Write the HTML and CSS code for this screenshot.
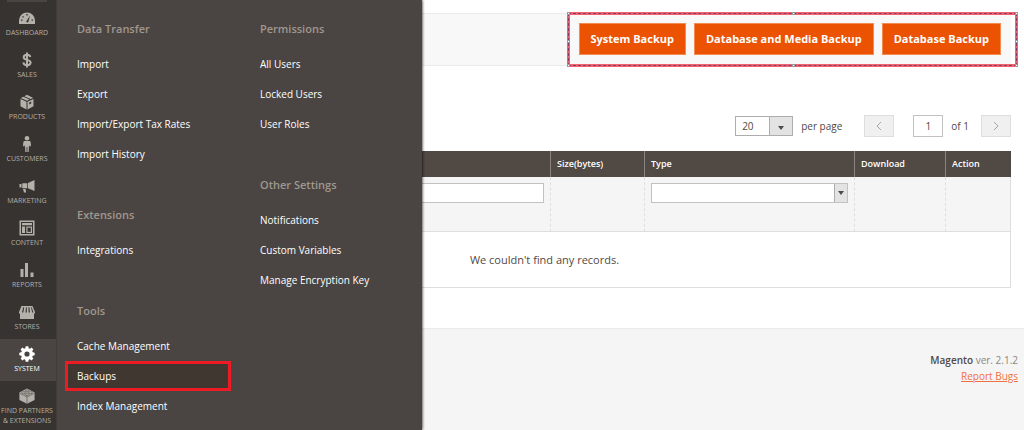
FILE: index.html
```html
<!DOCTYPE html>
<html lang="en">
<head>
<meta charset="utf-8">
<title>Backups</title>
<link rel="stylesheet" href="styles.css">
</head>
<body>
<div class="app">
  <nav class="sidebar" aria-label="Main">
    <ul class="nav-list">
      <li><a class="nav-item" href="#"><svg class="nav-icon" viewBox="0 0 16 16"><path d="M0 14V10.500a8 8 0 0 1 16 0V14z"/><path class="cut" d="M7 12l4-6.500L9.200 12.600zM2 9.500h1.500v1.300H2zM3.300 6.200h1.400v1.400H3.300zM7.300 4h1.400v1.400H7.300zM12.500 9.500H14v1.300h-1.500z"/></svg><span>Dashboard</span></a></li>
      <li><a class="nav-item" href="#"><svg class="nav-icon" viewBox="0 0 16 16"><path class="line" d="M11.300 5C11 3.300 9.700 2.700 8 2.700c-2 0-3.300.9-3.300 2.500 0 3.500 6.900 1.900 6.900 5.400 0 1.800-1.500 2.700-3.500 2.700s-3.500-.9-3.700-2.900M8 .5v15"/></svg><span>Sales</span></a></li>
      <li><a class="nav-item" href="#"><svg class="nav-icon" viewBox="0 0 16 16"><path d="M1.500 5l6 2.700V15.500l-6-3.300zM14.500 5l-6 2.700V15.500l6-3.300zM1.800 4l2.500-1.300L10.500 5.500 8 6.800zM5.300 2.200L8 .8l6.200 3.200-2.600 1.100z"/><path class="cut" d="M10.200 8.500l2-1v2l-2 1z"/></svg><span>Products</span></a></li>
      <li><a class="nav-item" href="#"><svg class="nav-icon" viewBox="0 0 16 16"><circle cx="8" cy="2.300" r="2.300"/><path d="M5.800 5h4.400c1 0 1.500.7 1.500 1.500L12 10l-1.300.5-.7-1.500-.3 7H8.400V11h-.8v5H6.300L6 9l-.7 1.500L4 10l.3-3.500C4.300 5.700 4.800 5 5.800 5z"/></svg><span>Customers</span></a></li>
      <li><a class="nav-item" href="#"><svg class="nav-icon" viewBox="0 0 16 16"><path d="M15.500 2v11L9 10.300V5zM8.300 5.200v5l-5 .1V5.200zM.5 6h2v3.500h-2zM4 11h2.500l.7 3.500H5z"/></svg><span>Marketing</span></a></li>
      <li><a class="nav-item" href="#"><svg class="nav-icon" viewBox="0 0 16 16"><path d="M.5.5h15v15H.5zM2 2v12h12V2z" fill-rule="evenodd"/><path d="M3 3h10v2.300H3zM3 6.500h3V13H3zM7.300 6.500H13V13H7.300z"/><path class="cut" d="M8.500 7.700h3.300v4.100H8.500z"/></svg><span>Content</span></a></li>
      <li><a class="nav-item" href="#"><svg class="nav-icon" viewBox="0 0 16 16"><path d="M1.500 7h3v8h-3zM6 1h3v14H6zM11.500 10.500h3V15h-3z"/></svg><span>Reports</span></a></li>
      <li><a class="nav-item" href="#"><svg class="nav-icon" viewBox="0 0 16 16"><path d="M2.500 2h11L16 8v1.500H0V8zM1 9h14v6H1z"/><path class="cut" d="M4.200 3.300h1L4.300 8.500H3zM7 3.300h.8v5.200H6.500zM9.400 3.300h1l.6 5.200H9.700zM12 3.300h.7L14.400 8.500h-1.200z"/></svg><span>Stores</span></a></li>
      <li><a class="nav-item nav-item-active" href="#" aria-current="page"><svg class="nav-icon" viewBox="0 0 16 16"><path fill-rule="evenodd" d="M6.700.3h2.600l.4 2 1.200.5L12.600 1.600l1.800 1.800-1.200 1.700.5 1.200 2 .4v2.600l-2 .4-.5 1.200 1.200 1.700-1.800 1.800-1.700-1.200-1.200.5-.4 2H6.700l-.4-2-1.200-.5-1.700 1.200-1.800-1.800 1.200-1.700-.5-1.200-2-.4V6.700l2-.4.5-1.200L1.600 3.400l1.800-1.800 1.700 1.200 1.200-.5zM8 5.400a2.600 2.600 0 1 0 0 5.200 2.600 2.600 0 0 0 0-5.200z"/></svg><span>System</span></a></li>
      <li><a class="nav-item" href="#"><svg class="nav-icon" viewBox="0 0 16 16"><path d="M.4 4.500L8 .5l7.600 4v7.500L8 15.700.4 12z"/><path class="crease" d="M.6 5.200L8 9l7.400-3.800M8 9v6.500"/><g class="crease"><ellipse cx="8" cy="2.900" rx="1.900" ry="1"/><ellipse cx="4.600" cy="4.700" rx="1.900" ry="1"/><ellipse cx="11.400" cy="4.700" rx="1.900" ry="1"/><ellipse cx="8" cy="6.500" rx="1.900" ry="1"/></g></svg><span>Find Partners<br>&amp; Extensions</span></a></li>
    </ul>
  </nav>

  <div class="flyout">
    <div class="flyout-column">
      <section class="menu-group">
        <h2>Data Transfer</h2>
        <a href="#">Import</a>
        <a href="#">Export</a>
        <a href="#">Import/Export Tax Rates</a>
        <a href="#">Import History</a>
      </section>
      <section class="menu-group">
        <h2>Extensions</h2>
        <a href="#">Integrations</a>
      </section>
      <section class="menu-group">
        <h2>Tools</h2>
        <a href="#">Cache Management</a>
        <a class="highlighted" href="#">Backups</a>
        <a href="#">Index Management</a>
      </section>
    </div>
    <div class="flyout-column">
      <section class="menu-group">
        <h2>Permissions</h2>
        <a href="#">All Users</a>
        <a href="#">Locked Users</a>
        <a href="#">User Roles</a>
      </section>
      <section class="menu-group">
        <h2>Other Settings</h2>
        <a href="#">Notifications</a>
        <a href="#">Custom Variables</a>
        <a href="#">Manage Encryption Key</a>
      </section>
    </div>
  </div>

  <div class="page">
    <main class="content">
      <div class="toolbar">
        <div class="actions">
          <button type="button">System Backup</button>
          <button type="button">Database and Media Backup</button>
          <button type="button">Database Backup</button>
          <div class="selection"><i class="nw"></i><i class="n"></i><i class="ne"></i><i class="e"></i><i class="se"></i><i class="s"></i><i class="sw"></i><i class="w"></i></div>
        </div>
      </div>

      <div class="pager">
        <span class="select page-size"><select id="page-size"><option>20</option></select></span>
        <label class="per-page" for="page-size">per page</label>
        <button class="step" type="button" aria-label="Previous page"><svg viewBox="0 0 8 10"><path d="M6 1L2 5l4 4"/></svg></button>
        <input class="page-number" id="page-number" type="text" value="1">
        <label class="page-total" for="page-number">of 1</label>
        <button class="step" type="button" aria-label="Next page"><svg viewBox="0 0 8 10"><path d="M2 1l4 4-4 4"/></svg></button>
      </div>

      <table class="grid">
        <colgroup><col><col class="col-size"><col class="col-type"><col class="col-download"><col class="col-action"></colgroup>
        <thead>
          <tr class="headings"><th></th><th>Size(bytes)</th><th>Type</th><th>Download</th><th>Action</th></tr>
          <tr class="filters">
            <td><input type="text" aria-label="Name"></td>
            <td></td>
            <td><span class="select type-filter"><select aria-label="Type"><option></option></select></span></td>
            <td></td>
            <td></td>
          </tr>
        </thead>
        <tbody><tr><td class="empty" colspan="5">We couldn't find any records.</td></tr></tbody>
      </table>
    </main>
    <footer class="footer">
      <p><strong>Magento</strong> ver. 2.1.2</p>
      <p><a href="#">Report Bugs</a></p>
    </footer>
  </div>
</div>
</body>
</html>
```
FILE: styles.css
```css
* { box-sizing: border-box; }

body {
  margin: 0;
  font: 10px/14px "Open Sans", "Noto Sans", sans-serif;
  color: #514943;
  background: #fff;
}

button, input, select { font: inherit; color: inherit; border-radius: 0; }
a { color: inherit; text-decoration: none; }
h2, p, ul { margin: 0; padding: 0; }

.app { position: relative; display: flex; min-height: 100vh; overflow: hidden; }

/* Sidebar */
.sidebar { flex: 0 0 57px; background: #373330; border-right: 1px solid #413c39; }
.nav-list { list-style: none; }
.nav-list::before {
  content: "";
  display: block;
  height: 2px;
  margin: 0 9px 1px 7px;
  background: #4a4542;
}
.nav-item {
  display: flex;
  flex-direction: column;
  align-items: center;
  gap: 2px;
  min-height: 42px;
  padding: 7px 2px 0 0;
  font-size: 7px;
  line-height: 10px;
  text-align: center;
  text-transform: uppercase;
  white-space: nowrap;
  color: #b4b0aa;
  --tile: #373330;
}
.nav-item-active { color: #fff; background: #4a4542; --tile: #4a4542; }
.nav-icon { flex: none; width: 16px; height: 16px; fill: currentColor; }
.nav-icon .line { fill: none; stroke: currentColor; stroke-width: 2; }
.nav-icon .cut { fill: var(--tile); }
.nav-icon .crease { fill: none; stroke: #5a5653; stroke-width: 0.700; }

/* Open submenu, lies over the page */
.flyout {
  position: absolute;
  z-index: 1;
  top: 0;
  bottom: 0;
  left: 57px;
  display: flex;
  gap: 17px;
  width: 365px;
  padding: 22px 8px 0;
  background: #4a4542;
  box-shadow: 0 0 3px #000;
  clip-path: inset(0 -3px 0 0);
  color: #fff;
}
.flyout-column { display: flex; flex: 1; flex-direction: column; gap: 39px; }
.menu-group h2 {
  margin-bottom: 13px;
  padding-left: 12px;
  font-size: 11px;
  font-weight: 600;
  line-height: 14px;
  color: #a0978e;
}
.menu-group a { display: block; padding: 8px 12px; }
.menu-group .highlighted { padding: 5px 9px; border: 3px solid #ed1c24; background: #413731; }

/* Page */
.page { display: flex; flex: 1; flex-direction: column; min-width: 0; }
.content { padding: 13px 13px 40px 21px; }

.toolbar {
  display: flex;
  justify-content: flex-end;
  padding: 9px 10px 10px;
  border: 1px solid #ebebeb;
  border-width: 1px 0;
  background: #f8f8f8;
}
.actions { position: relative; display: flex; gap: 8px; }
.actions button {
  height: 32px;
  padding: 0 11px;
  border: 1px solid #f28a52;
  background: #eb5202;
  font-size: 11px;
  font-weight: 700;
  color: #fff;
}

.selection {
  position: absolute;
  inset: -11px -17px -12px -12px;
  border: 3px solid #f0626f;
  pointer-events: none;
}
.selection::before {
  content: "";
  position: absolute;
  inset: -2px;
  border: 1px dashed #8c3a66;
}
.selection i {
  position: absolute;
  width: 3px;
  height: 3px;
  border: 1px solid #999;
  background: #fff;
}
.selection .nw, .selection .n, .selection .ne { top: -3px; }
.selection .sw, .selection .s, .selection .se { bottom: -3px; }
.selection .nw, .selection .w, .selection .sw { left: -3px; }
.selection .ne, .selection .e, .selection .se { right: -3px; }
.selection .n, .selection .s { left: 50%; }
.selection .e, .selection .w { top: 50%; }

.pager { display: flex; align-items: center; justify-content: flex-end; margin: 49px 0 14px; }

.select { position: relative; display: block; }
.select select {
  display: block;
  width: 100%;
  height: 20px;
  padding: 0 6px;
  border: 1px solid #adadad;
  background: #fff;
  appearance: none;
}
.select::before {
  content: "";
  position: absolute;
  top: 1px;
  right: 1px;
  bottom: 1px;
  width: 12px;
  border-left: 1px solid #adadad;
  background: #e3e3e3;
  pointer-events: none;
}
.select::after {
  content: "";
  position: absolute;
  top: 8px;
  right: 4px;
  border: 3px solid transparent;
  border-top: 4px solid #514943;
  border-bottom: 0;
  pointer-events: none;
}
.page-size { width: 58px; }
.page-size::before { width: 22px; }
.page-size::after { top: 10px; right: 9px; }
.per-page { margin: 0 22px 0 8px; }
.step {
  display: grid;
  place-items: center;
  width: 30px;
  height: 22px;
  padding: 0;
  border: 1px solid #dedede;
  background: #f0f0f0;
}
.step svg { width: 8px; height: 10px; fill: none; stroke: #a8a4a1; }
.page-number {
  width: 30px;
  height: 22px;
  margin: 0 8px 0 19px;
  padding: 0;
  border: 1px solid #c2c2c2;
  text-align: center;
}
.page-total { margin-right: 12px; }

.grid { width: 100%; table-layout: fixed; border-collapse: separate; border-spacing: 0; }
.col-size { width: 94px; }
.col-type { width: 210px; }
.col-download { width: 91px; }
.col-action { width: 66px; }
.grid th {
  height: 26px;
  padding: 0 6px;
  border-left: 1px solid #8a837f;
  background: #514943;
  font-size: 9px;
  font-weight: 600;
  text-align: left;
  color: #fff;
}
.filters td {
  height: 55px;
  padding: 6px;
  border-bottom: 1px solid #dedede;
  border-left: 1px dashed #dedede;
  background: #f5f5f5;
  vertical-align: top;
}
.filters td:last-child { border-right: 1px solid #dedede; }
.filters input { display: block; width: 100%; height: 20px; border: 1px solid #c2c2c2; }
.type-filter select { border-color: #c2c2c2; }
.grid .empty {
  height: 56px;
  padding: 0;
  border: 1px solid #dedede;
  border-top: 0;
  font-size: 11px;
  text-align: center;
}

.footer {
  flex: 1;
  padding: 23px 6px 0;
  border-top: 1px solid #ebebeb;
  background: #f5f5f5;
  line-height: 16px;
  text-align: right;
  color: #8a8580;
}
.footer strong { font-weight: 600; color: #514943; }
.footer a { text-decoration: underline; color: #f0703f; }
```
